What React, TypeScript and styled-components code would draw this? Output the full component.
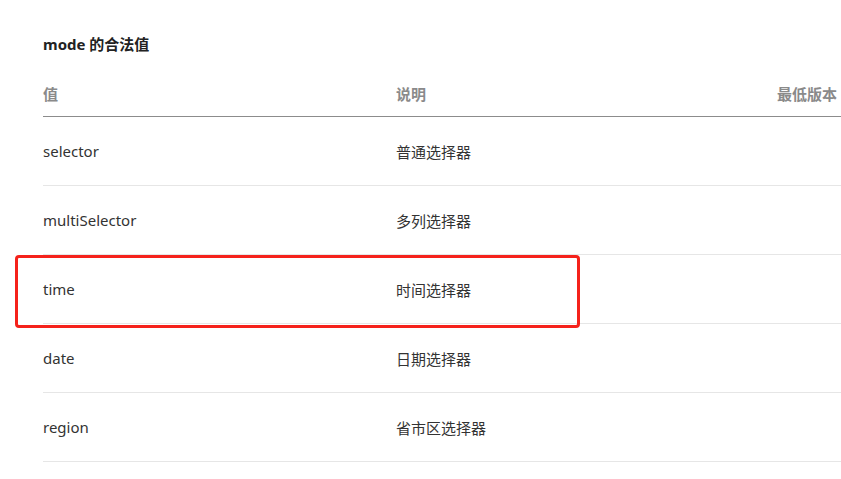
import React from "react";
import styled, { createGlobalStyle } from "styled-components";

interface RowType {
  value: string;
  desc: string;
  version?: string;
}

const rows: RowType[] = [
  { value: "selector", desc: "普通选择器" },
  { value: "multiSelector", desc: "多列选择器" },
  { value: "time", desc: "时间选择器" },
  { value: "date", desc: "日期选择器" },
  { value: "region", desc: "省市区选择器" },
];

const GlobalStyle = createGlobalStyle`
  html, body {
    margin: 0;
    padding: 0;
    background: #fff;
    overflow: hidden;
  }
  body {
    font-family: "Noto Sans", "Noto Sans CJK SC", sans-serif;
    color: #333;
  }
`;

const Page = styled.div`
  position: relative;
  width: 841px;
  height: 479px;
  padding: 34px 0 0 43px;
  box-sizing: border-box;
`;

const Title = styled.div`
  font-size: 15px;
  line-height: 20px;
  font-weight: 700;
  color: #222;
  margin-bottom: 16px;
`;

const Table = styled.table`
  width: 798px;
  border-collapse: collapse;
  font-size: 15px;
  table-layout: fixed;
`;

const HeadCell = styled.th<{ align?: string; width?: number; padRight?: number }>`
  height: 46px;
  padding: 0 ${(p) => p.padRight || 0}px 0 0;
  text-align: ${(p) => p.align || "left"};
  width: ${(p) => (p.width ? p.width + "px" : "auto")};
  font-weight: 700;
  color: #8a8a8a;
  border-bottom: 1px solid #8c8c8c;
  vertical-align: middle;
`;

const Cell = styled.td`
  height: 68px;
  padding: 0;
  border-bottom: 1px solid #e6e6e6;
  color: #333;
  vertical-align: middle;
`;

const Highlight = styled.div`
  position: absolute;
  left: 15px;
  top: 255px;
  width: 565px;
  height: 73px;
  border: 3px solid #f5221b;
  border-radius: 4px;
  box-sizing: border-box;
`;

const App: React.FC = () => {
  return (
    <>
      <GlobalStyle />
      <Page>
        <Title>mode 的合法值</Title>
        <Table>
          <thead>
            <tr>
              <HeadCell width={353}>值</HeadCell>
              <HeadCell>说明</HeadCell>
              <HeadCell align="right" width={196} padRight={4}>
                最低版本
              </HeadCell>
            </tr>
          </thead>
          <tbody>
            {rows.map((r) => (
              <tr key={r.value}>
                <Cell>{r.value}</Cell>
                <Cell>{r.desc}</Cell>
                <Cell>{r.version}</Cell>
              </tr>
            ))}
          </tbody>
        </Table>
        <Highlight />
      </Page>
    </>
  );
};

export default App;
